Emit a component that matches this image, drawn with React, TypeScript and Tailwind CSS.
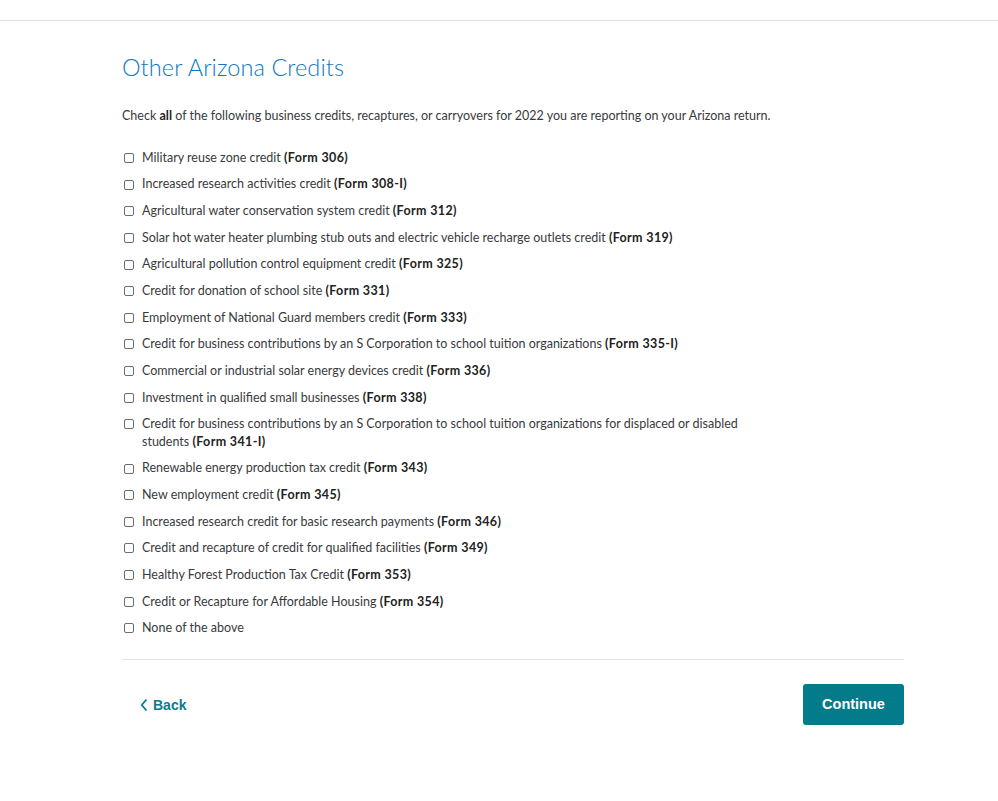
import React from "react";

const items: [string, string | null][] = [
  ["Military reuse zone credit", "(Form 306)"],
  ["Increased research activities credit", "(Form 308-I)"],
  ["Agricultural water conservation system credit", "(Form 312)"],
  ["Solar hot water heater plumbing stub outs and electric vehicle recharge outlets credit", "(Form 319)"],
  ["Agricultural pollution control equipment credit", "(Form 325)"],
  ["Credit for donation of school site", "(Form 331)"],
  ["Employment of National Guard members credit", "(Form 333)"],
  ["Credit for business contributions by an S Corporation to school tuition organizations", "(Form 335-I)"],
  ["Commercial or industrial solar energy devices credit", "(Form 336)"],
  ["Investment in qualified small businesses", "(Form 338)"],
  ["Credit for business contributions by an S Corporation to school tuition organizations for displaced or disabled students", "(Form 341-I)"],
  ["Renewable energy production tax credit", "(Form 343)"],
  ["New employment credit", "(Form 345)"],
  ["Increased research credit for basic research payments", "(Form 346)"],
  ["Credit and recapture of credit for qualified facilities", "(Form 349)"],
  ["Healthy Forest Production Tax Credit", "(Form 353)"],
  ["Credit or Recapture for Affordable Housing", "(Form 354)"],
  ["None of the above", null],
];

export default function App() {
  return (
    <div className="min-h-[801px] w-full bg-white" style={{ fontFamily: "Lato, 'Noto Sans', sans-serif" }}>
      <div className="h-[21px] border-b border-[#dcdedf]" />
      <div className="ml-[122px] w-[782px]">
        <h1 className="mt-[31px] text-[23.5px] leading-[30px] font-light tracking-[0.1px] text-[#0d77c4]">Other Arizona Credits</h1>
        <p className="mt-[25px] text-[12.5px] leading-[17px] text-[#393a3d]">
          Check <b className="font-bold text-[#222]">all</b> of the following business credits, recaptures, or carryovers for 2022 you are reporting on your Arizona return.
        </p>
        <div className="mt-[24.75px] flex flex-col gap-[9.15px]">
          {items.map(([t, f], i) => (
            <label key={i} className="flex items-start w-[660px] text-[12.5px] leading-[17.5px] text-[#393a3d]">
              <span className="mt-[4.25px] ml-[2px] mr-[8px] h-[10px] w-[10px] shrink-0 rounded-[2px] border border-[#6b6c72] bg-white" />
              <span>
                {t}
                {f && (
                  <>
                    {" "}
                    <b className="font-bold tracking-[0.35px] text-[#222]">{f}</b>
                  </>
                )}
              </span>
            </label>
          ))}
        </div>
        <div className="mt-[22.75px] border-t border-[#e4e5e6]" />
        <div className="mt-[24px] flex items-center justify-between">
          <button className="ml-[18px] mt-[1px] flex items-center gap-[5px] text-[14px] font-bold text-[#0a7b8c]" style={{ fontFamily: "'Liberation Sans', Arial, sans-serif" }}>
            <svg width="8" height="14" viewBox="0 0 8 14" fill="none">
              <path d="M6.5 1.5L1.8 7l4.7 5.5" stroke="#0a7b8c" strokeWidth="1.8" />
            </svg>
            Back
          </button>
          <button className="h-[41px] w-[101px] rounded-[3px] bg-[#047b8a] text-[14.5px] font-bold text-white" style={{ fontFamily: "'Liberation Sans', Arial, sans-serif" }}>
            Continue
          </button>
        </div>
      </div>
    </div>
  );
}
